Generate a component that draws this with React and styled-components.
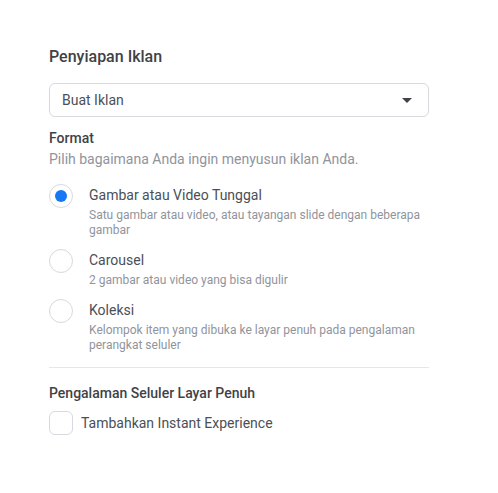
import React, { useState } from "react";
import styled, { createGlobalStyle } from "styled-components";

const Global = createGlobalStyle`
  html, body { margin: 0; padding: 0; background: #ffffff; }
  body { font-family: Roboto, "Liberation Sans", Arial, sans-serif; color: #4b4f56; }
  * { box-sizing: border-box; }
`;

const Panel = styled.div`
  width: 498px;
  padding: 47px 69px 40px 49px;
  display: flex;
  flex-direction: column;
`;

const Title = styled.h2`
  margin: 0;
  font-size: 16px;
  line-height: 20px;
  font-weight: 500;
  color: #3f4247;
`;

const Select = styled.div`
  margin-top: 16px;
  height: 34px;
  border: 1px solid #d6d9dd;
  border-radius: 6px;
  display: flex;
  align-items: center;
  justify-content: space-between;
  padding: 0 16px 0 12px;
  font-size: 14px;
  color: #4b4f56;
`;

const Caret = styled.svg`
  width: 10px;
  height: 5px;
  display: block;
`;

const SectionLabel = styled.div`
  margin-top: ${(p) => p.$top || 0}px;
  font-size: 14px;
  line-height: 18px;
  font-weight: 500;
  color: #3f4247;
`;

const Hint = styled.div`
  margin-top: 2px;
  font-size: 14px;
  line-height: 20px;
  color: #90949c;
`;

const Options = styled.div`
  margin-top: 16px;
  display: flex;
  flex-direction: column;
  gap: 12px;
`;

const Option = styled.label`
  display: flex;
  align-items: flex-start;
  gap: 16px;
  cursor: pointer;
`;

const Radio = styled.span`
  flex: none;
  width: 24px;
  height: 24px;
  border-radius: 50%;
  border: 1px solid #d6d9dd;
  display: flex;
  align-items: center;
  justify-content: center;
  margin-top: -1px;
  &::after {
    content: "";
    width: 12px;
    height: 12px;
    border-radius: 50%;
    background: ${(p) => (p.$checked ? "#1877f2" : "transparent")};
  }
`;

const OptionText = styled.div`
  display: flex;
  flex-direction: column;
`;

const OptionTitle = styled.div`
  font-size: 14px;
  line-height: 20px;
  color: #4b4f56;
`;

const OptionDesc = styled.div`
  margin-top: 3px;
  font-size: 12px;
  line-height: 15px;
  color: #90949c;
`;

const Divider = styled.hr`
  margin: 14px 0 0;
  border: none;
  border-top: 1px solid #e4e6e9;
`;

const CheckRow = styled.label`
  margin-top: 9px;
  display: flex;
  align-items: center;
  gap: 8px;
  font-size: 14px;
  line-height: 20px;
  color: #4b4f56;
  cursor: pointer;
`;

const CheckBox = styled.span`
  width: 24px;
  height: 24px;
  border: 1px solid #d6d9dd;
  border-radius: 6px;
  flex: none;
`;

const options = [
  {
    id: "single",
    title: "Gambar atau Video Tunggal",
    desc: "Satu gambar atau video, atau tayangan slide dengan beberapa gambar",
  },
  {
    id: "carousel",
    title: "Carousel",
    desc: "2 gambar atau video yang bisa digulir",
  },
  {
    id: "collection",
    title: "Koleksi",
    desc: "Kelompok item yang dibuka ke layar penuh pada pengalaman perangkat seluler",
  },
];

export default function App() {
  const [selected, setSelected] = useState("single");
  return (
    <>
      <Global />
      <Panel>
        <Title>Penyiapan Iklan</Title>
        <Select>
          <span>Buat Iklan</span>
          <Caret viewBox="0 0 10 5">
            <path d="M0 0h10L5 5z" fill="#3f4247" />
          </Caret>
        </Select>
        <SectionLabel $top={12}>Format</SectionLabel>
        <Hint>Pilih bagaimana Anda ingin menyusun iklan Anda.</Hint>
        <Options>
          {options.map((o) => (
            <Option key={o.id} onClick={() => setSelected(o.id)}>
              <Radio $checked={selected === o.id} />
              <OptionText>
                <OptionTitle>{o.title}</OptionTitle>
                <OptionDesc>{o.desc}</OptionDesc>
              </OptionText>
            </Option>
          ))}
        </Options>
        <Divider />
        <SectionLabel $top={16}>Pengalaman Seluler Layar Penuh</SectionLabel>
        <CheckRow>
          <CheckBox />
          Tambahkan Instant Experience
        </CheckRow>
      </Panel>
    </>
  );
}
